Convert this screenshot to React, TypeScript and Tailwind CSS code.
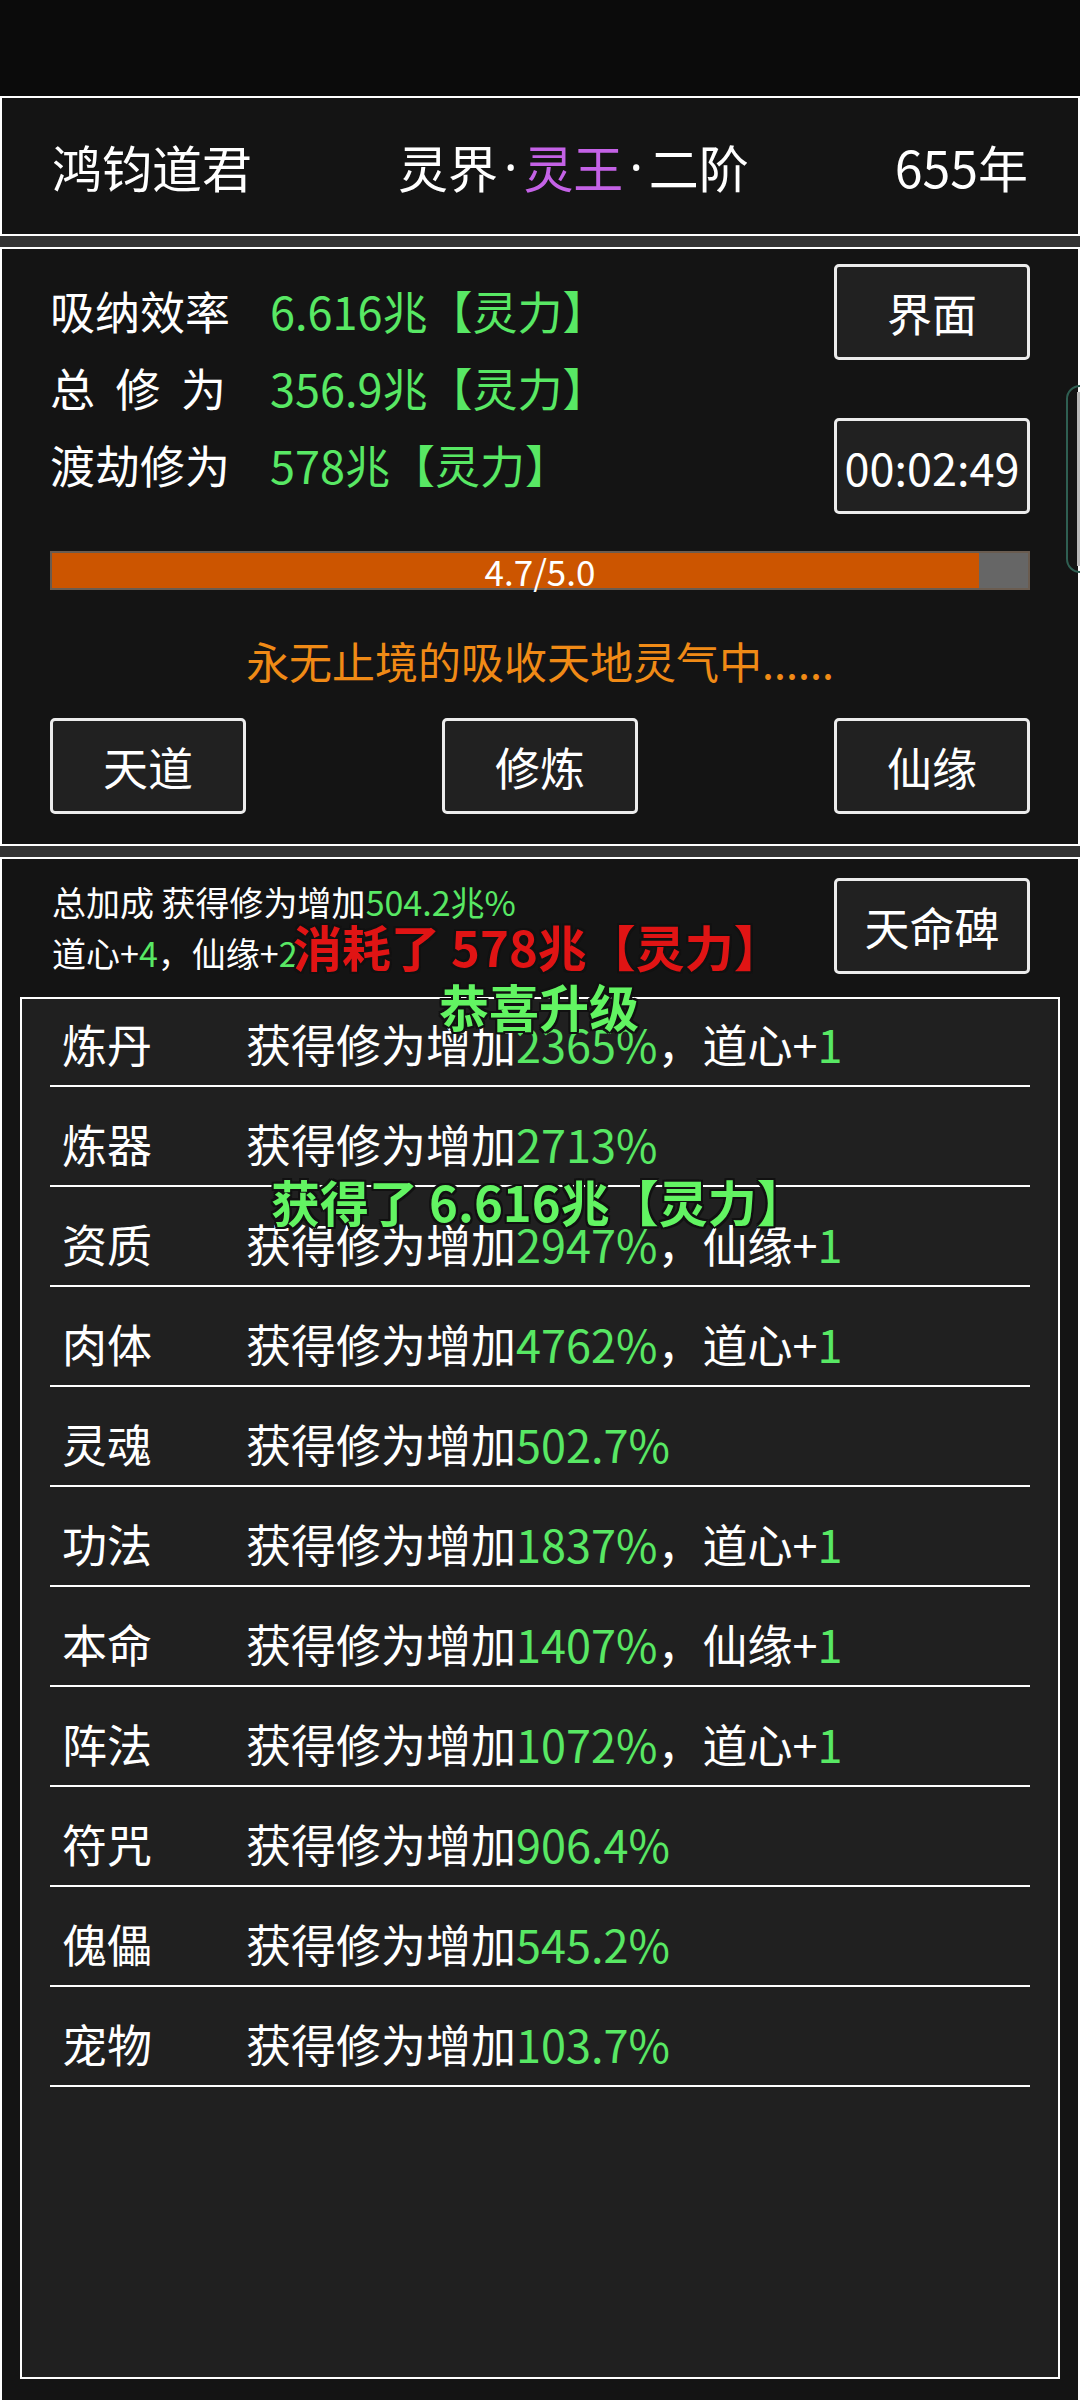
import React from 'react';

const FONT = "font-['Noto_Sans_CJK_SC','Noto_Sans',sans-serif]";

interface BonusRow {
  name: string;
  value: string;
  extra?: { label: string; amount: string };
}

const ROWS: BonusRow[] = [
  { name: '炼丹', value: '2365%', extra: { label: '道心+', amount: '1' } },
  { name: '炼器', value: '2713%' },
  { name: '资质', value: '2947%', extra: { label: '仙缘+', amount: '1' } },
  { name: '肉体', value: '4762%', extra: { label: '道心+', amount: '1' } },
  { name: '灵魂', value: '502.7%' },
  { name: '功法', value: '1837%', extra: { label: '道心+', amount: '1' } },
  { name: '本命', value: '1407%', extra: { label: '仙缘+', amount: '1' } },
  { name: '阵法', value: '1072%', extra: { label: '道心+', amount: '1' } },
  { name: '符咒', value: '906.4%' },
  { name: '傀儡', value: '545.2%' },
  { name: '宠物', value: '103.7%' },
];

const progress = { current: 4.7, max: 5.0 };

const GameButton: React.FC<{ label: string; className?: string }> = ({ label, className }) => (
  <button
    className={`flex h-[96px] w-[196px] items-center justify-center rounded-[5px] border-[3px] border-[#ececec] bg-[#212121] text-[45px] leading-none text-white ${className ?? ''}`}
  >
    {label}
  </button>
);

const Green: React.FC<{ children: React.ReactNode }> = ({ children }) => (
  <span className="text-[#58e864]">{children}</span>
);

// narrow latin middle dot instead of the full-width CJK one
const Dot = () => <span className="mx-[6px] font-['Noto_Sans',sans-serif]">·</span>;

const outline =
  '[text-shadow:-2px_-2px_0_#111,2px_-2px_0_#111,-2px_2px_0_#111,2px_2px_0_#111,0_2px_0_#111,0_-2px_0_#111,2px_0_0_#111,-2px_0_0_#111]';

export default function App() {
  const pct = (progress.current / progress.max) * 100 + 1;

  return (
    <div className={`relative h-[2400px] w-[1080px] overflow-hidden bg-[#0b0b0b] text-white ${FONT}`}>
      {/* status bar */}
      <div className="h-[96px] bg-[#0b0b0b]" />

      {/* header */}
      <div className="flex h-[140px] items-center justify-between border-2 border-white bg-[#141414] px-[50px] text-[50px] leading-none">
        <span>鸿钧道君</span>
        <span className="flex items-center">
          灵界
          <Dot />
          <span className="text-[#c462e6]">灵王</span>
          <Dot />
          二阶
        </span>
        <span>655年</span>
      </div>

      <div className="h-[11px] bg-[#343434]" />

      {/* cultivation panel */}
      <div className="flex h-[599px] flex-col border-2 border-white bg-[#141414] px-[48px]">
        <div className="flex justify-between">
          <div className="flex flex-col pt-[23px] text-[45px]">
            <div className="flex h-[77px] items-center">
              <span className="w-[220px]">吸纳效率</span>
              <Green>6.616兆【灵力】</Green>
            </div>
            <div className="flex h-[77px] items-center">
              <span className="flex w-[220px]">
                <span className="flex w-[176px] justify-between">
                  <span>总</span>
                  <span>修</span>
                  <span>为</span>
                </span>
              </span>
              <Green>356.9兆【灵力】</Green>
            </div>
            <div className="flex h-[77px] items-center">
              <span className="w-[220px]">渡劫修为</span>
              <Green>578兆【灵力】</Green>
            </div>
          </div>
          <div className="flex flex-col gap-[58px] pt-[15px]">
            <GameButton label="界面" />
            <GameButton label="00:02:49" />
          </div>
        </div>

        <div className="relative mt-[37px] h-[39px] border-2 border-[#6a5c50] bg-[#666666]">
          <div className="h-full bg-[#cc5500]" style={{ width: `${pct}%` }} />
          <span className="absolute inset-0 flex items-center justify-center text-[35px] leading-none">
            {progress.current.toFixed(1)}/{progress.max.toFixed(1)}
          </span>
        </div>

        <div className="mt-[40px] h-[60px] text-center text-[43px] leading-[60px] text-[#f08a16]">
          永无止境的吸收天地灵气中......
        </div>

        <div className="mt-[28px] flex justify-between">
          <GameButton label="天道" className="h-[95px]" />
          <GameButton label="修炼" className="h-[95px]" />
          <GameButton label="仙缘" className="h-[95px]" />
        </div>
      </div>

      <div className="h-[11px] bg-[#343434]" />

      {/* bonus panel */}
      <div className="h-[1543px] border-2 border-b-0 border-white bg-[#141414]">
        <div className="flex h-[138px] justify-between pl-[50px] pr-[48px]">
          <div className="pt-[17px] text-[34px] leading-[51px]">
            <div>
              总加成 获得修为增加<Green>504.2兆%</Green>
            </div>
            <div>
              道心+<Green>4</Green>，仙缘+<Green>2</Green>
            </div>
          </div>
          <GameButton label="天命碑" className="mt-[19px]" />
        </div>

        <div className="mx-[18px] h-[1382px] border-2 border-white bg-[#202020] px-[28px]">
          {ROWS.map((row, i) => (
            <div
              key={row.name}
              className={`flex items-end border-b-2 border-white pb-[16px] text-[45px] leading-[50px] ${
                i === 0 ? 'h-[88px]' : 'h-[100px]'
              }`}
            >
              <span className="w-[196px] pl-[12px]">{row.name}</span>
              <span>
                获得修为增加<Green>{row.value}</Green>
                {row.extra && (
                  <>
                    ，{row.extra.label}
                    <Green>{row.extra.amount}</Green>
                  </>
                )}
              </span>
            </div>
          ))}
        </div>
      </div>

      {/* floating toasts */}
      <div className={`absolute left-[293px] top-[916px] text-[49px] font-bold leading-[60px] text-[#e01414] ${outline}`}>
        消耗了 578兆【灵力】
      </div>
      <div className={`absolute left-[439px] top-[975px] text-[50px] font-bold leading-[60px] text-[#62f462] ${outline}`}>
        恭喜升级
      </div>
      <div className={`absolute left-[271px] top-[1171px] text-[49px] font-bold leading-[60px] text-[#62f462] ${outline}`}>
        获得了 6.616兆【灵力】
      </div>

      {/* edge handle */}
      <div className="absolute left-[1066px] top-[385px] h-[188px] w-[30px] rounded-[14px] border-2 border-[#2f5f52]" />
      <div className="absolute left-[1077px] top-[392px] h-[174px] w-[3px] bg-[#b8b8b8]" />
    </div>
  );
}
